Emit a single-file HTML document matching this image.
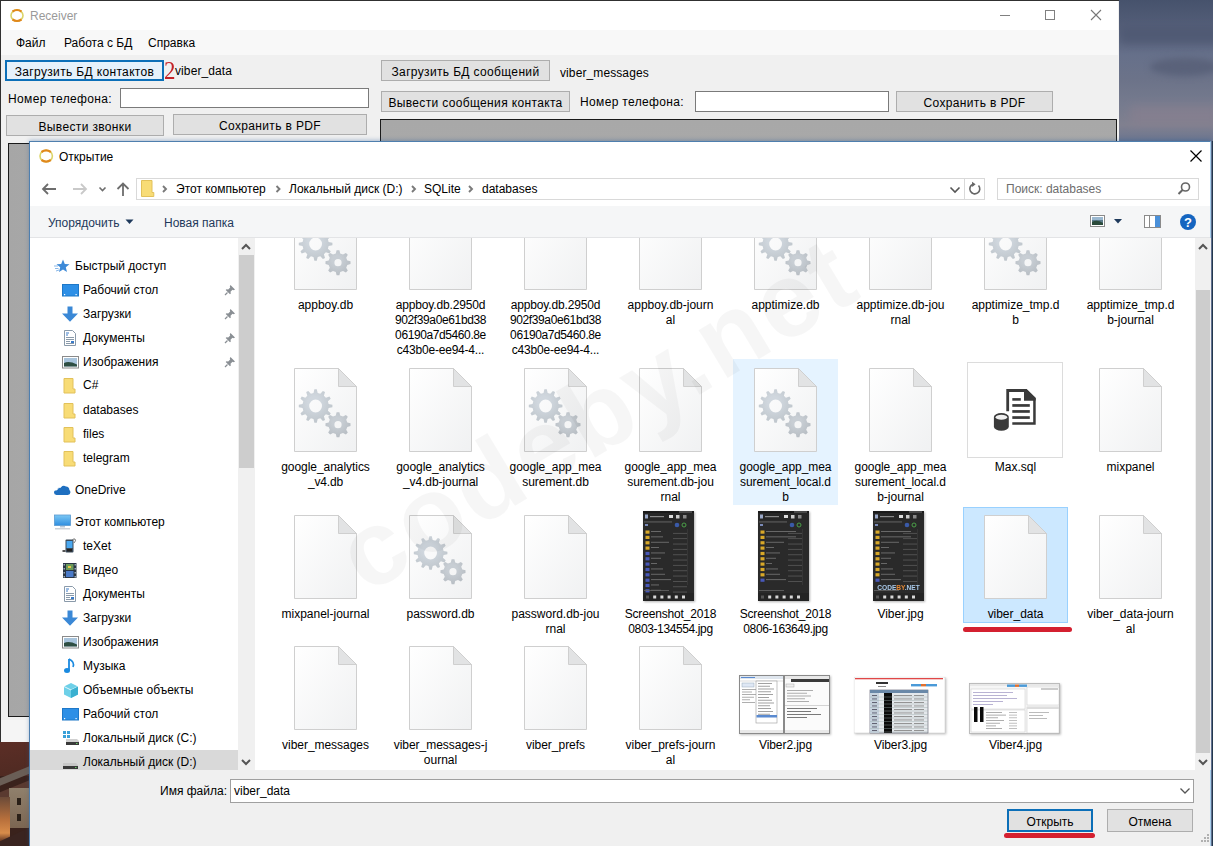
<!DOCTYPE html>
<html><head><meta charset="utf-8">
<style>
*{margin:0;padding:0;box-sizing:border-box}
html,body{width:1213px;height:846px;overflow:hidden;background:#4a5670}
body{position:relative;font-family:"Liberation Sans",sans-serif;font-size:12px;color:#000}
.rc{letter-spacing:0.35px}
.a{position:absolute}
.t{position:absolute;white-space:nowrap;line-height:17px}
.btn{position:absolute;background:#e1e1e1;border:1px solid #adadad;text-align:center;line-height:19px;white-space:nowrap;padding-top:2px}
.inp{position:absolute;background:#fff;border:1px solid #7a7a7a}
.nv{position:absolute;left:83px;white-space:nowrap;line-height:17px}
.fn{position:absolute;width:105px;text-align:center;line-height:15px;letter-spacing:0}
</style></head><body>
<div class="a" style="left:1119px;top:0;width:94px;height:846px;background:linear-gradient(180deg,#46526c 0px,#56607a 30px,#66708a 55px,#6c7389 80px,#767b8e 105px,#80808f 125px,#6a7590 142px,#6a7590 846px)"></div><div class="a" style="left:1120px;top:26px;width:100px;height:18px;background:#4e5872;filter:blur(4px);opacity:0.8"></div><div class="a" style="left:1150px;top:58px;width:70px;height:18px;border-radius:50%;background:#5a627a;filter:blur(3px)"></div><div class="a" style="left:1130px;top:105px;width:90px;height:20px;background:#8a8090;filter:blur(5px);opacity:0.6"></div><div class="a" style="left:0;top:742px;width:30px;height:104px;background:#3a221c;overflow:hidden"><div class="a" style="left:0;top:0;width:30px;height:34px;background:linear-gradient(170deg,#5c2e26,#4e2a22)"></div><div class="a" style="left:-4px;top:30px;width:40px;height:7px;background:#6a5e56;transform:rotate(-22deg)"></div><div class="a" style="left:-4px;top:44px;width:40px;height:8px;background:#5a3a30;transform:rotate(-22deg)"></div><div class="a" style="left:9px;top:46px;width:21px;height:40px;background:linear-gradient(180deg,#90806c,#7c6652)"></div><div class="a" style="left:17px;top:56px;width:4px;height:7px;background:#2a2018"></div><div class="a" style="left:17px;top:72px;width:4px;height:7px;background:#2a2018"></div><div class="a" style="left:0;top:55px;width:10px;height:45px;background:linear-gradient(180deg,#6a4a38,#b8703c 50%,#d88c4a 80%,#5a3020)"></div><div class="a" style="left:-5px;top:92px;width:45px;height:20px;background:#3a2420;transform:rotate(-25deg)"></div></div><div class="rc"><div class="a" style="left:0;top:0;width:1119px;height:742px;background:#f0f0f0;border:1px solid #303030;border-right:none"></div>
<div class="a" style="left:1px;top:1px;width:1117px;height:29px;background:#fff"></div>
<div class="a" style="left:1px;top:30px;width:1117px;height:25px;background:#f8f8f8"></div>
<div class="t" style="left:30px;top:8px;color:#9a9a9a;letter-spacing:0">Receiver</div>
<div class="t" style="left:16px;top:35px;letter-spacing:0">Файл</div>
<div class="t" style="left:64px;top:35px;letter-spacing:0">Работа с БД</div>
<div class="t" style="left:148px;top:35px;letter-spacing:0">Справка</div>
<svg class="a" style="left:990px;top:5px" width="120" height="20" viewBox="0 0 120 20">
<line x1="10" y1="10.5" x2="20" y2="10.5" stroke="#808080" stroke-width="1"/>
<rect x="55.5" y="5.5" width="9" height="9" fill="none" stroke="#808080" stroke-width="1"/>
<path d="M101 5 L111 15 M111 5 L101 15" stroke="#777" stroke-width="1.1"/>
</svg>
<svg class="a" style="left:9px;top:8px" width="16" height="15" viewBox="0 0 16 15">
<ellipse cx="8" cy="7.5" rx="6" ry="5.6" fill="none" stroke="#dcd468" stroke-width="1.6"/>
<path d="M3.5 3.5 Q8 0.5 12.5 3.5" fill="none" stroke="#e0881c" stroke-width="2.2"/><path d="M3.5 11.5 Q8 14.5 12.5 11.5" fill="none" stroke="#e0881c" stroke-width="2.2"/>
</svg>
<div class="btn" style="left:5px;top:60px;width:159px;height:21px;border:2px solid #0c6fb8;background:#e5f1fb;line-height:18px;padding-top:1px">Загрузить БД контактов</div>
<div class="t" style="left:164px;top:58px;font-family:'Liberation Serif',serif;font-size:26px;line-height:26px;color:#c42228;letter-spacing:0;transform:scaleX(0.88);transform-origin:0 0">2</div>
<div class="t" style="left:175px;top:63px;letter-spacing:0.1px">viber_data</div>
<div class="t" style="left:8px;top:91px">Номер телефона:</div>
<div class="inp" style="left:120px;top:88px;width:249px;height:20px"></div>
<div class="btn" style="left:6px;top:115px;width:158px;height:21px">Вывести звонки</div>
<div class="btn" style="left:173px;top:114px;width:194px;height:21px">Сохранить в PDF</div>
<div class="a" style="left:8px;top:143px;width:400px;height:574px;border:1px solid #1a1a1a;background:linear-gradient(90deg,#a6a6a6,#b8b8b8)"></div>
<div class="btn" style="left:381px;top:60px;width:169px;height:21px">Загрузить БД сообщений</div>
<div class="t" style="left:560px;top:65px;letter-spacing:0.1px">viber_messages</div>
<div class="btn" style="left:381px;top:91px;width:189px;height:21px">Вывести сообщения контакта</div>
<div class="t" style="left:580px;top:94px">Номер телефона:</div>
<div class="inp" style="left:695px;top:91px;width:194px;height:21px"></div>
<div class="btn" style="left:896px;top:91px;width:157px;height:21px">Сохранить в PDF</div>
<div class="a" style="left:380px;top:119px;width:737px;height:600px;border:1px solid #1a1a1a;background:linear-gradient(180deg,#a8a8a8,#b8b8b8)"></div>
<div class="a" style="left:1px;top:720px;width:1117px;height:22px;background:#f5f5f5"></div>
</div>
<div class="a" style="left:29px;top:141px;width:1182px;height:705px;background:#fff;border:1px solid #4f7fae;border-right:1px solid #a8cfec;border-bottom:none;box-shadow:0 -1px 4px rgba(40,90,150,0.35)"></div><svg class="a" style="left:38px;top:148px" width="16" height="16" viewBox="0 0 16 16">
<ellipse cx="8.2" cy="8" rx="6.2" ry="5.8" fill="none" stroke="#dcd468" stroke-width="1.6"/>
<path d="M3.5 4 Q8 0.8 12.8 4" fill="none" stroke="#e0881c" stroke-width="2.2"/><path d="M3.5 12 Q8 15.2 12.8 12" fill="none" stroke="#e0881c" stroke-width="2.2"/></svg>
<div class="t" style="left:59px;top:149px">Открытие</div>
<svg class="a" style="left:1189px;top:149px" width="14" height="14" viewBox="0 0 14 14"><path d="M1.5 1.5 L12.5 12.5 M12.5 1.5 L1.5 12.5" stroke="#000" stroke-width="1.2"/></svg>
<div class="a" style="left:1212px;top:141px;width:1px;height:705px;background:#24384c"></div><svg class="a" style="left:40px;top:180px" width="95" height="18" viewBox="0 0 95 18">
<path d="M3 9 H16 M8 4 L3 9 L8 14" fill="none" stroke="#6d6d6d" stroke-width="1.8"/>
<path d="M33 9 H46 M41 4 L46 9 L41 14" fill="none" stroke="#c9c9c9" stroke-width="1.8"/>
<path d="M59.5 7.5 L62.5 10.5 L65.5 7.5" fill="none" stroke="#6d6d6d" stroke-width="1.6"/>
<path d="M83 16 V4 M77.5 9 L83 3.5 L88.5 9" fill="none" stroke="#6d6d6d" stroke-width="1.8"/>
</svg>
<div class="a" style="left:136px;top:178px;width:849px;height:22px;border:1px solid #d9d9d9;background:#fff"></div>
<div class="a" style="left:964px;top:178px;width:1px;height:22px;background:#d9d9d9"></div>
<svg class="a" style="left:141px;top:180px" width="14" height="17" viewBox="0 0 14 17"><path d="M0.5 0.5 H11 V12.5 H12.8 V16.5 H0.5 Z" fill="#f8dc76" stroke="#e2c15a" stroke-width="1"/></svg>
<svg class="a" style="left:160px;top:184px" width="400" height="10" viewBox="0 0 400 10">
<path d="M3 2 L6 5 L3 8" fill="none" stroke="#7a7a7a" stroke-width="1.9"/>
<path d="M116.5 2 L119.5 5 L116.5 8" fill="none" stroke="#7a7a7a" stroke-width="1.9"/>
<path d="M252 2 L255 5 L252 8" fill="none" stroke="#7a7a7a" stroke-width="1.9"/>
<path d="M309 2 L312 5 L309 8" fill="none" stroke="#7a7a7a" stroke-width="1.9"/>
</svg>
<div class="t" style="left:176px;top:181px">Этот компьютер</div>
<div class="t" style="left:289px;top:181px">Локальный диск (D:)</div>
<div class="t" style="left:424px;top:181px">SQLite</div>
<div class="t" style="left:482px;top:181px">databases</div>
<svg class="a" style="left:948px;top:184px" width="14" height="12" viewBox="0 0 14 12"><path d="M2.5 3.5 L7 8 L11.5 3.5" fill="none" stroke="#555" stroke-width="1.6"/></svg>
<svg class="a" style="left:967px;top:181px" width="16" height="16" viewBox="0 0 16 16"><path d="M11.5 4.5 A5 5 0 1 1 6 3.2" fill="none" stroke="#666" stroke-width="1.6"/><path d="M5 0.8 L8.6 3.3 L5.2 5.9 Z" fill="#666"/></svg>
<div class="a" style="left:997px;top:178px;width:202px;height:22px;border:1px solid #d9d9d9;background:#fff"></div>
<div class="t" style="left:1006px;top:181px;color:#6d6d6d">Поиск: databases</div>
<svg class="a" style="left:1176px;top:181px" width="16" height="16" viewBox="0 0 16 16"><circle cx="9.5" cy="6" r="4" fill="none" stroke="#666" stroke-width="1.6"/><path d="M6.7 8.8 L2.5 13" stroke="#666" stroke-width="2"/></svg>
<div class="a" style="left:30px;top:206px;width:1180px;height:32px;background:#f5f6f7;border-bottom:1px solid #e3e4e6"></div>
<div class="t" style="left:48px;top:214.5px;color:#1e395b">Упорядочить</div>
<svg class="a" style="left:125px;top:219px" width="10" height="6" viewBox="0 0 10 6"><path d="M0.5 0.5 H8.5 L4.5 5 Z" fill="#1e395b"/></svg>
<div class="t" style="left:164px;top:214.5px;color:#1e395b">Новая папка</div>
<svg class="a" style="left:1089px;top:213px" width="110" height="18" viewBox="0 0 110 18">
<rect x="1.5" y="2.5" width="14" height="11" fill="#fff" stroke="#8a8a8a"/><rect x="3" y="4" width="11" height="8" fill="#5a7a8a"/><path d="M3 9 Q8 6 14 10 V12 H3Z" fill="#2a4a3a"/><rect x="3" y="4" width="11" height="3" fill="#9ab8d0"/>
<path d="M25 6 H33 L29 10.5 Z" fill="#1e395b"/>
<rect x="55.5" y="2.5" width="16" height="12" fill="#fff" stroke="#8a8a8a"/><rect x="66" y="3" width="5" height="11" fill="#4a90d9"/><line x1="60.5" y1="3" x2="60.5" y2="14" stroke="#8a8a8a"/>
<circle cx="99" cy="9" r="8" fill="#1565c0"/><text x="99" y="13.5" font-family="Liberation Sans" font-weight="bold" font-size="13" fill="#fff" text-anchor="middle">?</text>
</svg>
<div class="a" style="left:30px;top:238px;width:1180px;height:532px;background:#fff"></div><div class="a" style="left:238px;top:238px;width:17px;height:532px;background:#f0f0f0"></div>
<div class="a" style="left:239px;top:255px;width:15px;height:213px;background:#cdcdcd"></div>
<svg class="a" style="left:240px;top:242px" width="12" height="10" viewBox="0 0 12 10"><path d="M2 7 L6 3 L10 7" fill="none" stroke="#555" stroke-width="2"/></svg>
<svg class="a" style="left:240px;top:757px" width="12" height="10" viewBox="0 0 12 10"><path d="M2 3 L6 7 L10 3" fill="none" stroke="#555" stroke-width="2"/></svg>
<div class="a" style="left:30px;top:750px;width:208px;height:20px;background:#d9d9d9"></div>
<svg class="a" style="left:54px;top:258px" width="18" height="17" viewBox="0 0 18 17"><path d="M9 1.5 L10.8 6 L15.5 6.3 L11.8 9.3 L13 14 L9 11.4 L5 14 L6.2 9.3 L2.5 6.3 L7.2 6 Z" fill="#3d8ad8"/><path d="M0 8 L4 8 M1 10.5 L4.5 10.5 M2 13 L5 12" stroke="#8ab8e8" stroke-width="1"/></svg><div class="t" style="left:75px;top:258px">Быстрый доступ</div><svg class="a" style="left:62px;top:282px" width="18" height="17" viewBox="0 0 18 17"><rect x="0.5" y="2.5" width="16" height="11.5" fill="#2d8fe6" stroke="#1e78c8" stroke-width="1"/><rect x="2" y="12" width="1.2" height="1.2" fill="#fff"/><rect x="13.5" y="12" width="1.2" height="1.2" fill="#fff"/></svg><div class="t" style="left:83px;top:282px">Рабочий стол</div><svg class="a" style="left:62px;top:306px" width="18" height="17" viewBox="0 0 18 17"><path d="M5.5 0.5 H10.5 V7.5 H16 L8 15.7 L0 7.5 H5.5 Z" fill="#3a88d6"/></svg><div class="t" style="left:83px;top:306px">Загрузки</div><svg class="a" style="left:62px;top:330px" width="18" height="17" viewBox="0 0 18 17"><path d="M2.5 0.5 H10.5 L13.5 3.5 V15.5 H2.5 Z" fill="#fff" stroke="#8a9aaa"/><path d="M4 3 H7 M4 5 H6" stroke="#3a7ac8" stroke-width="1"/><path d="M4 7.5 H12 M4 9.5 H12 M4 11.5 H8 M4 13.5 H12" stroke="#8a9aaa" stroke-width="1"/><rect x="9" y="11" width="3" height="2" fill="#3a7ac8"/></svg><div class="t" style="left:83px;top:330px">Документы</div><svg class="a" style="left:62px;top:354px" width="18" height="17" viewBox="0 0 18 17"><rect x="0.5" y="2.5" width="16" height="11.5" fill="#fff" stroke="#8a8a8a"/><rect x="2" y="4" width="13" height="8.5" fill="#a8c4dc"/><path d="M2 9 Q7 6.5 15 10.5 V12.5 H2 Z" fill="#2e4e42"/></svg><div class="t" style="left:83px;top:354px">Изображения</div><svg class="a" style="left:62px;top:377px" width="18" height="17" viewBox="0 0 18 17"><path d="M2 1.5 H11 V12 H13 V16 H2 Z" fill="#f8dc76" stroke="#e2c15a"/></svg><div class="t" style="left:83px;top:377px">C#</div><svg class="a" style="left:62px;top:402px" width="18" height="17" viewBox="0 0 18 17"><path d="M2 1.5 H11 V12 H13 V16 H2 Z" fill="#f8dc76" stroke="#e2c15a"/></svg><div class="t" style="left:83px;top:402px">databases</div><svg class="a" style="left:62px;top:426px" width="18" height="17" viewBox="0 0 18 17"><path d="M2 1.5 H11 V12 H13 V16 H2 Z" fill="#f8dc76" stroke="#e2c15a"/></svg><div class="t" style="left:83px;top:426px">files</div><svg class="a" style="left:62px;top:450px" width="18" height="17" viewBox="0 0 18 17"><path d="M2 1.5 H11 V12 H13 V16 H2 Z" fill="#f8dc76" stroke="#e2c15a"/></svg><div class="t" style="left:83px;top:450px">telegram</div><svg class="a" style="left:54px;top:482px" width="18" height="17" viewBox="0 0 18 17"><path d="M2.5 12.9 Q0 12.9 0 10.6 Q0 8.2 2.8 8.2 Q3.6 5 7 5.2 Q9.2 2.8 12 4.4 Q15.2 4.6 15.4 8 Q16.5 8.6 16.4 10.5 Q16.2 12.9 13.8 12.9 Z" fill="#1e6fc0"/><path d="M2.8 8.2 Q3.6 5 7 5.2" fill="none" stroke="#fff" stroke-width="0.8"/></svg><div class="t" style="left:75px;top:482px">OneDrive</div><svg class="a" style="left:54px;top:514px" width="18" height="17" viewBox="0 0 18 17"><defs><linearGradient id="pcg" x1="0" y1="0" x2="0" y2="1"><stop offset="0" stop-color="#7cc8f4"/><stop offset="1" stop-color="#2e8ee0"/></linearGradient></defs><rect x="0.5" y="1" width="16" height="10.5" fill="url(#pcg)" stroke="#5a9ad0" stroke-width="0.8"/><rect x="6" y="12" width="5" height="1.5" fill="#b8c8d8"/><rect x="1" y="14.2" width="15" height="1.2" fill="#c0c8d0"/></svg><div class="t" style="left:75px;top:514px">Этот компьютер</div><svg class="a" style="left:62px;top:538px" width="18" height="17" viewBox="0 0 18 17"><rect x="3.5" y="1.5" width="8" height="13" rx="1" fill="#3a4a5a"/><rect x="4.5" y="3" width="6" height="7" fill="#4aa8f0"/><rect x="5" y="11" width="5" height="2.5" fill="#222"/><path d="M10 3 Q11 0 13 1 Q14.5 2.5 12 5" fill="none" stroke="#555" stroke-width="0.8"/><rect x="0.5" y="12" width="3" height="2" fill="#555"/></svg><div class="t" style="left:83px;top:538px">teXet</div><svg class="a" style="left:62px;top:562px" width="18" height="17" viewBox="0 0 18 17"><rect x="1" y="1" width="13.5" height="15" fill="#2a3644"/><rect x="1.5" y="2" width="1.5" height="1.5" fill="#9ab"/><rect x="1.5" y="6" width="1.5" height="1.5" fill="#9ab"/><rect x="1.5" y="10" width="1.5" height="1.5" fill="#9ab"/><rect x="1.5" y="14" width="1.5" height="1.5" fill="#9ab"/><rect x="12.5" y="2" width="1.5" height="1.5" fill="#9ab"/><rect x="12.5" y="6" width="1.5" height="1.5" fill="#9ab"/><rect x="12.5" y="10" width="1.5" height="1.5" fill="#9ab"/><rect x="12.5" y="14" width="1.5" height="1.5" fill="#9ab"/><rect x="4" y="2" width="7.5" height="6" fill="#6a9a5a"/><rect x="4" y="9" width="7.5" height="6" fill="#4a7ac8"/><rect x="6" y="4" width="3" height="2" fill="#e8c848"/></svg><div class="t" style="left:83px;top:562px">Видео</div><svg class="a" style="left:62px;top:586px" width="18" height="17" viewBox="0 0 18 17"><path d="M2.5 0.5 H10.5 L13.5 3.5 V15.5 H2.5 Z" fill="#fff" stroke="#8a9aaa"/><path d="M4 3 H7 M4 5 H6" stroke="#3a7ac8" stroke-width="1"/><path d="M4 7.5 H12 M4 9.5 H12 M4 11.5 H8 M4 13.5 H12" stroke="#8a9aaa" stroke-width="1"/><rect x="9" y="11" width="3" height="2" fill="#3a7ac8"/></svg><div class="t" style="left:83px;top:586px">Документы</div><svg class="a" style="left:62px;top:610px" width="18" height="17" viewBox="0 0 18 17"><path d="M5.5 0.5 H10.5 V7.5 H16 L8 15.7 L0 7.5 H5.5 Z" fill="#3a88d6"/></svg><div class="t" style="left:83px;top:610px">Загрузки</div><svg class="a" style="left:62px;top:634px" width="18" height="17" viewBox="0 0 18 17"><rect x="0.5" y="2.5" width="16" height="11.5" fill="#fff" stroke="#8a8a8a"/><rect x="2" y="4" width="13" height="8.5" fill="#a8c4dc"/><path d="M2 9 Q7 6.5 15 10.5 V12.5 H2 Z" fill="#2e4e42"/></svg><div class="t" style="left:83px;top:634px">Изображения</div><svg class="a" style="left:62px;top:658px" width="18" height="17" viewBox="0 0 18 17"><path d="M7 1 V12" stroke="#1a8ae0" stroke-width="1.8"/><ellipse cx="5" cy="12.5" rx="3" ry="2.5" fill="#1a8ae0"/><path d="M7 1 Q13 4 11 9" fill="none" stroke="#1a8ae0" stroke-width="1.6"/></svg><div class="t" style="left:83px;top:658px">Музыка</div><svg class="a" style="left:62px;top:682px" width="18" height="17" viewBox="0 0 18 17"><path d="M9 1 L16 4.5 V12.5 L9 16 L2 12.5 V4.5 Z" fill="#6ed0e8"/><path d="M2 4.5 L9 8 L16 4.5" fill="none" stroke="#fff" stroke-width="0.8"/><path d="M9 8 V16 L16 12.5 V4.5 Z" fill="#3ab0d0"/></svg><div class="t" style="left:83px;top:682px">Объемные объекты</div><svg class="a" style="left:62px;top:706px" width="18" height="17" viewBox="0 0 18 17"><rect x="0.5" y="2.5" width="16" height="11.5" fill="#2d8fe6" stroke="#1e78c8" stroke-width="1"/><rect x="2" y="12" width="1.2" height="1.2" fill="#fff"/><rect x="13.5" y="12" width="1.2" height="1.2" fill="#fff"/></svg><div class="t" style="left:83px;top:706px">Рабочий стол</div><svg class="a" style="left:62px;top:730px" width="18" height="17" viewBox="0 0 18 17"><rect x="1" y="1" width="3" height="3" fill="#3aa0d8"/><rect x="5" y="1" width="3" height="3" fill="#3aa0d8"/><rect x="1" y="5" width="3" height="3" fill="#3aa0d8"/><rect x="5" y="5" width="3" height="3" fill="#3aa0d8"/><path d="M4 9 H15 L17 11 V15 H4 Z" fill="#d0d0d0"/><rect x="4" y="12" width="13" height="3" fill="#3a3a3a"/><rect x="14" y="13" width="1.5" height="1" fill="#6c6"/></svg><div class="t" style="left:83px;top:730px">Локальный диск (C:)</div><svg class="a" style="left:62px;top:754px" width="18" height="17" viewBox="0 0 18 17"><path d="M1 9 H14 L16 11 V15 H1 Z" fill="#c8c8c8"/><rect x="1" y="12" width="15" height="3" fill="#3a3a3a"/><rect x="13" y="13" width="1.5" height="1" fill="#6c6"/></svg><div class="t" style="left:83px;top:754px">Локальный диск (D:)</div><svg class="a" style="left:224px;top:284px" width="12" height="12" viewBox="0 0 12 12"><path d="M6.5 1 L11 5.5 L9.8 6.2 L8.5 5.8 L6.5 7.8 L6.8 9.5 L6 10.3 L1.7 6 L2.5 5.2 L4.2 5.5 L6.2 3.5 L5.8 2.2 Z" fill="#8a8f94"/><path d="M3.5 8.5 L1 11" stroke="#8a8f94" stroke-width="1.3"/></svg><svg class="a" style="left:224px;top:308px" width="12" height="12" viewBox="0 0 12 12"><path d="M6.5 1 L11 5.5 L9.8 6.2 L8.5 5.8 L6.5 7.8 L6.8 9.5 L6 10.3 L1.7 6 L2.5 5.2 L4.2 5.5 L6.2 3.5 L5.8 2.2 Z" fill="#8a8f94"/><path d="M3.5 8.5 L1 11" stroke="#8a8f94" stroke-width="1.3"/></svg><svg class="a" style="left:224px;top:332px" width="12" height="12" viewBox="0 0 12 12"><path d="M6.5 1 L11 5.5 L9.8 6.2 L8.5 5.8 L6.5 7.8 L6.8 9.5 L6 10.3 L1.7 6 L2.5 5.2 L4.2 5.5 L6.2 3.5 L5.8 2.2 Z" fill="#8a8f94"/><path d="M3.5 8.5 L1 11" stroke="#8a8f94" stroke-width="1.3"/></svg><svg class="a" style="left:224px;top:356px" width="12" height="12" viewBox="0 0 12 12"><path d="M6.5 1 L11 5.5 L9.8 6.2 L8.5 5.8 L6.5 7.8 L6.8 9.5 L6 10.3 L1.7 6 L2.5 5.2 L4.2 5.5 L6.2 3.5 L5.8 2.2 Z" fill="#8a8f94"/><path d="M3.5 8.5 L1 11" stroke="#8a8f94" stroke-width="1.3"/></svg><div class="a" style="left:1195px;top:238px;width:16px;height:532px;background:#f0f0f0"></div>
<div class="a" style="left:1196px;top:290px;width:14px;height:463px;background:#cdcdcd"></div>
<svg class="a" style="left:1197px;top:242px" width="12" height="10" viewBox="0 0 12 10"><path d="M2 7 L6 3 L10 7" fill="none" stroke="#555" stroke-width="2"/></svg>
<svg class="a" style="left:1197px;top:757px" width="12" height="10" viewBox="0 0 12 10"><path d="M2 3 L6 7 L10 3" fill="none" stroke="#555" stroke-width="2"/></svg>
<div class="a" style="left:0;top:0;width:1213px;height:846px;clip-path:inset(238px 18px 76px 255px)"><svg width="0" height="0" style="position:absolute"><defs><linearGradient id="pg" x1="0" y1="0" x2="1" y2="1"><stop offset="0" stop-color="#ffffff"/><stop offset="1" stop-color="#f0f1f2"/></linearGradient><radialGradient id="gg" cx="0.45" cy="0.4" r="0.6"><stop offset="0.3" stop-color="#d0d7de"/><stop offset="1" stop-color="#bfc6cc"/></radialGradient><radialGradient id="gg2" cx="0.45" cy="0.4" r="0.6"><stop offset="0.3" stop-color="#c8ced4"/><stop offset="1" stop-color="#b8bec4"/></radialGradient><symbol id="page" viewBox="0 0 63 84"><path d="M0.5 0.5 H44.5 L62.5 18.5 V83.5 H0.5 Z" fill="url(#pg)" stroke="#cfcfcf"/><path d="M44.5 0.5 V18.5 H62.5 Z" fill="#e2e3e4" stroke="#cfcfcf"/></symbol><symbol id="gear" viewBox="0 0 63 84"><path d="M0.5 0.5 H44.5 L62.5 18.5 V83.5 H0.5 Z" fill="url(#pg)" stroke="#cfcfcf"/><path d="M44.5 0.5 V18.5 H62.5 Z" fill="#e2e3e4" stroke="#cfcfcf"/><path d="M19.5 25.0 L20.4 21.2 L22.8 21.2 L23.7 25.0 L26.3 25.7 L28.9 22.9 L31.0 24.1 L29.9 27.7 L31.9 29.7 L35.5 28.6 L36.7 30.7 L33.9 33.3 L34.6 35.9 L38.4 36.8 L38.4 39.2 L34.6 40.1 L33.9 42.7 L36.7 45.3 L35.5 47.4 L31.9 46.3 L29.9 48.3 L31.0 51.9 L28.9 53.1 L26.3 50.3 L23.7 51.0 L22.8 54.8 L20.4 54.8 L19.5 51.0 L16.9 50.3 L14.3 53.1 L12.2 51.9 L13.3 48.3 L11.3 46.3 L7.7 47.4 L6.5 45.3 L9.3 42.7 L8.6 40.1 L4.8 39.2 L4.8 36.8 L8.6 35.9 L9.3 33.3 L6.5 30.7 L7.7 28.6 L11.3 29.7 L13.3 27.7 L12.2 24.1 L14.3 22.9 L16.9 25.7 Z M15.2 38.0 a6.4 6.4 0 1 0 12.8 0 a6.4 6.4 0 1 0 -12.8 0 Z" fill="url(#gg)" fill-rule="evenodd"/><path d="M41.8 47.4 L42.6 44.2 L45.4 44.2 L46.2 47.4 L49.0 48.5 L51.9 46.9 L53.8 48.8 L52.2 51.7 L53.3 54.5 L56.5 55.3 L56.5 58.1 L53.3 58.9 L52.2 61.7 L53.8 64.6 L51.9 66.5 L49.0 64.9 L46.2 66.0 L45.4 69.2 L42.6 69.2 L41.8 66.0 L39.0 64.9 L36.1 66.5 L34.2 64.6 L35.8 61.7 L34.7 58.9 L31.5 58.1 L31.5 55.3 L34.7 54.5 L35.8 51.7 L34.2 48.8 L36.1 46.9 L39.0 48.5 Z M40.4 56.7 a3.6 3.6 0 1 0 7.2 0 a3.6 3.6 0 1 0 -7.2 0 Z" fill="url(#gg2)" fill-rule="evenodd"/></symbol></defs></svg><div class="a" style="left:733px;top:359px;width:105px;height:146px;background:#e5f3ff"></div><div class="a" style="left:963px;top:507px;width:105px;height:116px;background:#cce8ff;border:1px solid #99d1ff"></div><svg class="a" style="left:294px;top:206px" width="63" height="84"><use href="#gear"/></svg><div class="fn" style="left:273px;top:298px"><span style="letter-spacing:-0.00px">appboy.db</span></div><svg class="a" style="left:409px;top:206px" width="63" height="84"><use href="#page"/></svg><div class="fn" style="left:388px;top:298px"><span style="letter-spacing:-0.15px">appboy.db.2950d</span><br><span style="letter-spacing:-0.37px">902f39a0e61bd38</span><br><span style="letter-spacing:-0.40px">06190a7d5460.8e</span><br><span style="letter-spacing:-0.21px">c43b0e-ee94-4...</span></div><svg class="a" style="left:524px;top:206px" width="63" height="84"><use href="#page"/></svg><div class="fn" style="left:503px;top:298px"><span style="letter-spacing:-0.15px">appboy.db.2950d</span><br><span style="letter-spacing:-0.37px">902f39a0e61bd38</span><br><span style="letter-spacing:-0.40px">06190a7d5460.8e</span><br><span style="letter-spacing:-0.21px">c43b0e-ee94-4...</span></div><svg class="a" style="left:639px;top:206px" width="63" height="84"><use href="#page"/></svg><div class="fn" style="left:618px;top:298px"><span style="letter-spacing:-0.00px">appboy.db-journ</span><br><span style="letter-spacing:-0.00px">al</span></div><svg class="a" style="left:754px;top:206px" width="63" height="84"><use href="#gear"/></svg><div class="fn" style="left:733px;top:298px"><span style="letter-spacing:-0.00px">apptimize.db</span></div><svg class="a" style="left:869px;top:206px" width="63" height="84"><use href="#page"/></svg><div class="fn" style="left:848px;top:298px"><span style="letter-spacing:-0.00px">apptimize.db-jou</span><br><span style="letter-spacing:-0.00px">rnal</span></div><svg class="a" style="left:984px;top:206px" width="63" height="84"><use href="#gear"/></svg><div class="fn" style="left:963px;top:298px"><span style="letter-spacing:-0.02px">apptimize_tmp.d</span><br><span style="letter-spacing:-0.00px">b</span></div><svg class="a" style="left:1099px;top:206px" width="63" height="84"><use href="#page"/></svg><div class="fn" style="left:1078px;top:298px"><span style="letter-spacing:-0.02px">apptimize_tmp.d</span><br><span style="letter-spacing:-0.00px">b-journal</span></div><svg class="a" style="left:294px;top:368px" width="63" height="84"><use href="#gear"/></svg><div class="fn" style="left:273px;top:460px"><span style="letter-spacing:-0.05px">google_analytics</span><br><span style="letter-spacing:-0.13px">_v4.db</span></div><svg class="a" style="left:409px;top:368px" width="63" height="84"><use href="#page"/></svg><div class="fn" style="left:388px;top:460px"><span style="letter-spacing:-0.05px">google_analytics</span><br><span style="letter-spacing:-0.06px">_v4.db-journal</span></div><svg class="a" style="left:524px;top:368px" width="63" height="84"><use href="#gear"/></svg><div class="fn" style="left:503px;top:460px"><span style="letter-spacing:-0.07px">google_app_mea</span><br><span style="letter-spacing:-0.00px">surement.db</span></div><svg class="a" style="left:639px;top:368px" width="63" height="84"><use href="#page"/></svg><div class="fn" style="left:618px;top:460px"><span style="letter-spacing:-0.07px">google_app_mea</span><br><span style="letter-spacing:-0.00px">surement.db-jou</span><br><span style="letter-spacing:-0.00px">rnal</span></div><svg class="a" style="left:754px;top:368px" width="63" height="84"><use href="#gear"/></svg><div class="fn" style="left:733px;top:460px"><span style="letter-spacing:-0.07px">google_app_mea</span><br><span style="letter-spacing:-0.02px">surement_local.d</span><br><span style="letter-spacing:-0.00px">b</span></div><svg class="a" style="left:869px;top:368px" width="63" height="84"><use href="#page"/></svg><div class="fn" style="left:848px;top:460px"><span style="letter-spacing:-0.07px">google_app_mea</span><br><span style="letter-spacing:-0.02px">surement_local.d</span><br><span style="letter-spacing:-0.00px">b-journal</span></div><div class="a" style="left:967px;top:362px;width:96px;height:96px;border:1px solid #dcdcdc;background:#fff"></div><svg class="a" style="left:985px;top:380px" width="60" height="60" viewBox="0 0 60 60">
<path d="M21.3 8.9 H41.5 L50.7 18 V44.8 H27.3 V42.2 H48.2 V20.6 H39 V12 H24.1 V31.2 H21.3 Z" fill="#3a3a3a"/>
<path d="M41.5 8.9 L50.7 18 V20.6 H39 V8.9 Z" fill="#3a3a3a"/>
<rect x="27.3" y="18.1" width="8.5" height="2.6" fill="#3a3a3a"/>
<rect x="27.3" y="24.1" width="17.5" height="2.7" fill="#3a3a3a"/>
<rect x="27.3" y="30.1" width="17.5" height="2.7" fill="#3a3a3a"/>
<rect x="27.3" y="36.2" width="17.5" height="2.7" fill="#3a3a3a"/>
<path d="M8.9 37 A7.45 4 0 0 1 23.8 37 V46.7 A7.45 4 0 0 1 8.9 46.7 Z" fill="#3a3a3a"/>
<ellipse cx="16.4" cy="37.2" rx="5.8" ry="2.5" fill="#f0f0f0"/>
</svg><div class="fn" style="left:963px;top:460px"><span style="letter-spacing:-0.00px">Max.sql</span></div><svg class="a" style="left:1099px;top:368px" width="63" height="84"><use href="#page"/></svg><div class="fn" style="left:1078px;top:460px"><span style="letter-spacing:-0.00px">mixpanel</span></div><svg class="a" style="left:294px;top:515px" width="63" height="84"><use href="#page"/></svg><div class="fn" style="left:273px;top:607px"><span style="letter-spacing:-0.00px">mixpanel-journal</span></div><svg class="a" style="left:409px;top:515px" width="63" height="84"><use href="#gear"/></svg><div class="fn" style="left:388px;top:607px"><span style="letter-spacing:-0.00px">password.db</span></div><svg class="a" style="left:524px;top:515px" width="63" height="84"><use href="#page"/></svg><div class="fn" style="left:503px;top:607px"><span style="letter-spacing:-0.00px">password.db-jou</span><br><span style="letter-spacing:-0.00px">rnal</span></div><svg class="a" style="left:643px;top:511px;filter:drop-shadow(1px 1px 1px rgba(0,0,0,0.3))" width="52" height="91" viewBox="0 0 52 91"><rect x="0" y="0" width="51" height="90" fill="#2a2a2a"/><rect x="0" y="0" width="51" height="2" fill="#1a1a1a"/><rect x="36" y="0.5" width="13" height="1" fill="#777"/><rect x="0" y="2" width="51" height="7" fill="#262626"/><rect x="2" y="3.5" width="3" height="4" fill="#9aa8c8"/><rect x="7" y="5" width="14" height="1.2" fill="#8a8a8a"/><rect x="26" y="4" width="4" height="3" fill="#ddd"/><rect x="33" y="4" width="3.5" height="3.5" fill="#ccc"/><rect x="40" y="4" width="3.5" height="3.5" fill="#888"/><rect x="1" y="10.5" width="28" height="0.9" fill="#6a6a6a"/><rect x="2" y="13" width="3" height="2" fill="#7a8ab8"/><circle cx="34" cy="14" r="2.3" fill="#3a5aa8"/><circle cx="41" cy="14" r="2" fill="none" stroke="#4aa048" stroke-width="1"/><rect x="2.5" y="19.5" width="4" height="3.2" fill="#d8a828"/><rect x="8" y="20.1" width="10" height="0.9" fill="#707070"/><rect x="30" y="21.9" width="14" height="0.9" fill="#555"/><rect x="2.5" y="24.8" width="4" height="3.2" fill="#d8a828"/><rect x="8" y="25.4" width="12" height="0.9" fill="#707070"/><rect x="30" y="27.2" width="14" height="0.9" fill="#555"/><rect x="2.5" y="30.2" width="4" height="3.2" fill="#d8a828"/><rect x="8" y="30.8" width="18" height="0.9" fill="#707070"/><rect x="30" y="32.6" width="14" height="0.9" fill="#555"/><rect x="2.5" y="35.5" width="4" height="3.2" fill="#d8a828"/><rect x="8" y="36.1" width="8" height="0.9" fill="#707070"/><rect x="30" y="37.9" width="14" height="0.9" fill="#555"/><rect x="2.5" y="40.9" width="4" height="3.2" fill="#4858b8"/><rect x="8" y="41.5" width="14" height="0.9" fill="#707070"/><rect x="30" y="43.3" width="14" height="0.9" fill="#555"/><rect x="2.5" y="46.2" width="4" height="3.2" fill="#4858b8"/><rect x="8" y="46.8" width="10" height="0.9" fill="#707070"/><rect x="30" y="48.6" width="14" height="0.9" fill="#555"/><rect x="2.5" y="51.5" width="4" height="3.2" fill="#4858b8"/><rect x="8" y="52.1" width="6" height="0.9" fill="#707070"/><rect x="30" y="53.9" width="14" height="0.9" fill="#555"/><rect x="2.5" y="56.9" width="4" height="3.2" fill="#4858b8"/><rect x="8" y="57.5" width="12" height="0.9" fill="#707070"/><rect x="30" y="59.3" width="14" height="0.9" fill="#555"/><rect x="2.5" y="62.2" width="4" height="3.2" fill="#4858b8"/><rect x="8" y="62.8" width="14" height="0.9" fill="#707070"/><rect x="30" y="64.6" width="14" height="0.9" fill="#555"/><rect x="2.5" y="67.6" width="4" height="3.2" fill="#4858b8"/><rect x="8" y="68.2" width="20" height="0.9" fill="#707070"/><rect x="30" y="70.0" width="14" height="0.9" fill="#555"/><rect x="2.5" y="72.9" width="4" height="3.2" fill="#4858b8"/><rect x="8" y="73.5" width="8" height="0.9" fill="#707070"/><rect x="30" y="75.3" width="14" height="0.9" fill="#555"/><rect x="2.5" y="78.2" width="4" height="3.2" fill="#4858b8"/><rect x="8" y="78.8" width="10" height="0.9" fill="#707070"/><rect x="30" y="80.6" width="14" height="0.9" fill="#555"/><rect x="1" y="79" width="25" height="0.8" fill="#666"/><rect x="0" y="82" width="51" height="8" fill="#242424"/><rect x="3.0" y="84.5" width="3" height="3" fill="#555"/><rect x="10.2" y="84.5" width="3" height="3" fill="#d8d8d8"/><rect x="17.4" y="84.5" width="3" height="3" fill="#d8d8d8"/><rect x="24.6" y="84.5" width="3" height="3" fill="#d8d8d8"/><rect x="31.8" y="84.5" width="3" height="3" fill="#d8d8d8"/><rect x="39.0" y="84.5" width="3" height="3" fill="#d8d8d8"/><rect x="44" y="18" width="0.8" height="56" fill="#3a3a3a"/></svg><div class="fn" style="left:618px;top:607px"><span style="letter-spacing:-0.16px">Screenshot_2018</span><br><span style="letter-spacing:-0.38px">0803-134554.jpg</span></div><svg class="a" style="left:758px;top:511px;filter:drop-shadow(1px 1px 1px rgba(0,0,0,0.3))" width="52" height="91" viewBox="0 0 52 91"><rect x="0" y="0" width="51" height="90" fill="#2a2a2a"/><rect x="0" y="0" width="51" height="2" fill="#1a1a1a"/><rect x="36" y="0.5" width="13" height="1" fill="#777"/><rect x="0" y="2" width="51" height="7" fill="#262626"/><rect x="2" y="3.5" width="3" height="4" fill="#9aa8c8"/><rect x="7" y="5" width="14" height="1.2" fill="#8a8a8a"/><rect x="26" y="4" width="4" height="3" fill="#ddd"/><rect x="33" y="4" width="3.5" height="3.5" fill="#ccc"/><rect x="40" y="4" width="3.5" height="3.5" fill="#888"/><rect x="1" y="10.5" width="28" height="0.9" fill="#6a6a6a"/><rect x="2" y="13" width="3" height="2" fill="#7a8ab8"/><circle cx="34" cy="14" r="2.3" fill="#3a5aa8"/><circle cx="41" cy="14" r="2" fill="none" stroke="#4aa048" stroke-width="1"/><rect x="2.5" y="19.5" width="4" height="3.2" fill="#d8a828"/><rect x="8" y="20.1" width="30" height="0.9" fill="#707070"/><rect x="30" y="21.9" width="14" height="0.9" fill="#555"/><rect x="2.5" y="24.8" width="4" height="3.2" fill="#d8a828"/><rect x="8" y="25.4" width="30" height="0.9" fill="#707070"/><rect x="30" y="27.2" width="14" height="0.9" fill="#555"/><rect x="2.5" y="30.2" width="4" height="3.2" fill="#d8a828"/><rect x="8" y="30.8" width="18" height="0.9" fill="#707070"/><rect x="30" y="32.6" width="14" height="0.9" fill="#555"/><rect x="2.5" y="35.5" width="4" height="3.2" fill="#d8a828"/><rect x="8" y="36.1" width="8" height="0.9" fill="#707070"/><rect x="30" y="37.9" width="14" height="0.9" fill="#555"/><rect x="2.5" y="40.9" width="4" height="3.2" fill="#d8a828"/><rect x="8" y="41.5" width="14" height="0.9" fill="#707070"/><rect x="30" y="43.3" width="14" height="0.9" fill="#555"/><rect x="2.5" y="46.2" width="4" height="3.2" fill="#d8a828"/><rect x="8" y="46.8" width="10" height="0.9" fill="#707070"/><rect x="30" y="48.6" width="14" height="0.9" fill="#555"/><rect x="2.5" y="51.5" width="4" height="3.2" fill="#d8a828"/><rect x="8" y="52.1" width="6" height="0.9" fill="#707070"/><rect x="30" y="53.9" width="14" height="0.9" fill="#555"/><rect x="2.5" y="56.9" width="4" height="3.2" fill="#d8a828"/><rect x="8" y="57.5" width="12" height="0.9" fill="#707070"/><rect x="30" y="59.3" width="14" height="0.9" fill="#555"/><rect x="2.5" y="62.2" width="4" height="3.2" fill="#d8a828"/><rect x="8" y="62.8" width="14" height="0.9" fill="#707070"/><rect x="30" y="64.6" width="14" height="0.9" fill="#555"/><rect x="2.5" y="67.6" width="4" height="3.2" fill="#4858b8"/><rect x="8" y="68.2" width="20" height="0.9" fill="#707070"/><rect x="30" y="70.0" width="14" height="0.9" fill="#555"/><rect x="1" y="79" width="25" height="0.8" fill="#666"/><rect x="0" y="82" width="51" height="8" fill="#242424"/><rect x="3.0" y="84.5" width="3" height="3" fill="#555"/><rect x="10.2" y="84.5" width="3" height="3" fill="#d8d8d8"/><rect x="17.4" y="84.5" width="3" height="3" fill="#d8d8d8"/><rect x="24.6" y="84.5" width="3" height="3" fill="#d8d8d8"/><rect x="31.8" y="84.5" width="3" height="3" fill="#d8d8d8"/><rect x="39.0" y="84.5" width="3" height="3" fill="#d8d8d8"/><rect x="44" y="18" width="0.8" height="56" fill="#3a3a3a"/></svg><div class="fn" style="left:733px;top:607px"><span style="letter-spacing:-0.16px">Screenshot_2018</span><br><span style="letter-spacing:-0.38px">0806-163649.jpg</span></div><svg class="a" style="left:873px;top:511px;filter:drop-shadow(1px 1px 1px rgba(0,0,0,0.3))" width="52" height="91" viewBox="0 0 52 91"><rect x="0" y="0" width="51" height="90" fill="#2a2a2a"/><rect x="0" y="0" width="51" height="2" fill="#1a1a1a"/><rect x="36" y="0.5" width="13" height="1" fill="#777"/><rect x="0" y="2" width="51" height="7" fill="#262626"/><rect x="2" y="3.5" width="3" height="4" fill="#9aa8c8"/><rect x="7" y="5" width="14" height="1.2" fill="#8a8a8a"/><rect x="26" y="4" width="4" height="3" fill="#ddd"/><rect x="33" y="4" width="3.5" height="3.5" fill="#ccc"/><rect x="40" y="4" width="3.5" height="3.5" fill="#888"/><rect x="1" y="10.5" width="28" height="0.9" fill="#6a6a6a"/><rect x="2" y="13" width="3" height="2" fill="#7a8ab8"/><circle cx="34" cy="14" r="2.3" fill="#3a5aa8"/><circle cx="41" cy="14" r="2" fill="none" stroke="#4aa048" stroke-width="1"/><rect x="2.5" y="19.5" width="4" height="3.2" fill="#d8a828"/><rect x="8" y="20.1" width="30" height="0.9" fill="#707070"/><rect x="30" y="21.9" width="14" height="0.9" fill="#555"/><rect x="2.5" y="24.8" width="4" height="3.2" fill="#d8a828"/><rect x="8" y="25.4" width="30" height="0.9" fill="#707070"/><rect x="30" y="27.2" width="14" height="0.9" fill="#555"/><rect x="2.5" y="30.2" width="4" height="3.2" fill="#d8a828"/><rect x="8" y="30.8" width="18" height="0.9" fill="#707070"/><rect x="30" y="32.6" width="14" height="0.9" fill="#555"/><rect x="2.5" y="35.5" width="4" height="3.2" fill="#d8a828"/><rect x="8" y="36.1" width="8" height="0.9" fill="#707070"/><rect x="30" y="37.9" width="14" height="0.9" fill="#555"/><rect x="2.5" y="40.9" width="4" height="3.2" fill="#d8a828"/><rect x="8" y="41.5" width="14" height="0.9" fill="#707070"/><rect x="30" y="43.3" width="14" height="0.9" fill="#555"/><rect x="2.5" y="46.2" width="4" height="3.2" fill="#d8a828"/><rect x="8" y="46.8" width="10" height="0.9" fill="#707070"/><rect x="30" y="48.6" width="14" height="0.9" fill="#555"/><rect x="2.5" y="51.5" width="4" height="3.2" fill="#d8a828"/><rect x="8" y="52.1" width="6" height="0.9" fill="#707070"/><rect x="30" y="53.9" width="14" height="0.9" fill="#555"/><rect x="2.5" y="56.9" width="4" height="3.2" fill="#d8a828"/><rect x="8" y="57.5" width="12" height="0.9" fill="#707070"/><rect x="30" y="59.3" width="14" height="0.9" fill="#555"/><rect x="2.5" y="62.2" width="4" height="3.2" fill="#d8a828"/><rect x="8" y="62.8" width="14" height="0.9" fill="#707070"/><rect x="30" y="64.6" width="14" height="0.9" fill="#555"/><rect x="2.5" y="67.6" width="4" height="3.2" fill="#4858b8"/><rect x="8" y="68.2" width="20" height="0.9" fill="#707070"/><rect x="30" y="70.0" width="14" height="0.9" fill="#555"/><rect x="1" y="79" width="25" height="0.8" fill="#666"/><rect x="0" y="82" width="51" height="8" fill="#242424"/><rect x="3.0" y="84.5" width="3" height="3" fill="#555"/><rect x="10.2" y="84.5" width="3" height="3" fill="#d8d8d8"/><rect x="17.4" y="84.5" width="3" height="3" fill="#d8d8d8"/><rect x="24.6" y="84.5" width="3" height="3" fill="#d8d8d8"/><rect x="31.8" y="84.5" width="3" height="3" fill="#d8d8d8"/><rect x="39.0" y="84.5" width="3" height="3" fill="#d8d8d8"/><text x="25.5" y="78.5" text-anchor="middle" font-family="Liberation Sans" font-weight="bold" font-size="6.6" fill="#a8c8e8" letter-spacing="0">CODE<tspan fill="#e08838">BY</tspan>.NET</text><rect x="44" y="18" width="0.8" height="56" fill="#3a3a3a"/></svg><div class="fn" style="left:848px;top:607px"><span style="letter-spacing:-0.03px">Viber.jpg</span></div><svg class="a" style="left:984px;top:515px" width="63" height="84"><use href="#page"/></svg><div class="fn" style="left:963px;top:607px"><span style="letter-spacing:-0.03px">viber_data</span></div><svg class="a" style="left:1099px;top:515px" width="63" height="84"><use href="#page"/></svg><div class="fn" style="left:1078px;top:607px"><span style="letter-spacing:-0.02px">viber_data-journ</span><br><span style="letter-spacing:-0.00px">al</span></div><svg class="a" style="left:294px;top:646px" width="63" height="84"><use href="#page"/></svg><div class="fn" style="left:273px;top:738px"><span style="letter-spacing:-0.04px">viber_messages</span></div><svg class="a" style="left:409px;top:646px" width="63" height="84"><use href="#page"/></svg><div class="fn" style="left:388px;top:738px"><span style="letter-spacing:-0.03px">viber_messages-j</span><br><span style="letter-spacing:-0.00px">ournal</span></div><svg class="a" style="left:524px;top:646px" width="63" height="84"><use href="#page"/></svg><div class="fn" style="left:503px;top:738px"><span style="letter-spacing:-0.02px">viber_prefs</span></div><svg class="a" style="left:639px;top:646px" width="63" height="84"><use href="#page"/></svg><div class="fn" style="left:618px;top:738px"><span style="letter-spacing:-0.01px">viber_prefs-journ</span><br><span style="letter-spacing:-0.00px">al</span></div><svg class="a" style="left:739px;top:675px;filter:drop-shadow(1px 1px 1px rgba(0,0,0,0.25))" width="92" height="59" viewBox="0 0 92 59"><rect x="0.5" y="0.5" width="44" height="58" fill="#fff" stroke="#8a8a8a"/><rect x="45.5" y="0.5" width="45" height="58" fill="#fbfbfb" stroke="#8a8a8a"/><rect x="1" y="1" width="43" height="3" fill="#dfe6ee"/><rect x="2" y="2" width="14" height="1" fill="#5a8ad0"/><rect x="1" y="5" width="43" height="2" fill="#eee"/><rect x="3" y="8" width="12" height="4" fill="#dfe8f5" stroke="#9ab" stroke-width="0.5"/><rect x="3" y="14.0" width="16" height="0.8" fill="#9a9a9a"/><rect x="3" y="16.6" width="10" height="0.8" fill="#9a9a9a"/><rect x="3" y="19.2" width="14" height="0.8" fill="#9a9a9a"/><rect x="3" y="21.8" width="12" height="0.8" fill="#9a9a9a"/><rect x="3" y="24.4" width="8" height="0.8" fill="#9a9a9a"/><rect x="3" y="27.0" width="13" height="0.8" fill="#9a9a9a"/><rect x="17" y="6" width="21" height="42" fill="#fff" stroke="#9a9a9a" stroke-width="0.6"/><rect x="19" y="8.0" width="14" height="0.8" fill="#8a8a8a"/><rect x="19" y="10.8" width="12" height="0.8" fill="#8a8a8a"/><rect x="19" y="13.6" width="16" height="0.8" fill="#8a8a8a"/><rect x="19" y="16.4" width="13" height="0.8" fill="#8a8a8a"/><rect x="19" y="19.2" width="15" height="0.8" fill="#8a8a8a"/><rect x="19" y="22.0" width="11" height="0.8" fill="#8a8a8a"/><rect x="19" y="24.8" width="14" height="0.8" fill="#8a8a8a"/><rect x="19" y="27.6" width="16" height="0.8" fill="#8a8a8a"/><rect x="19" y="30.4" width="12" height="0.8" fill="#8a8a8a"/><rect x="19" y="33.2" width="13" height="0.8" fill="#8a8a8a"/><rect x="19" y="36.0" width="15" height="0.8" fill="#8a8a8a"/><rect x="19" y="38.8" width="12" height="0.8" fill="#8a8a8a"/><rect x="17.5" y="40" width="20.5" height="2.5" fill="#5a8ad0"/><rect x="1" y="55" width="43" height="3" fill="#e8e8e8"/><rect x="46" y="1" width="44" height="3" fill="#e8e8e8"/><rect x="52" y="4" width="38" height="3" fill="#3a3a3a"/><rect x="47" y="9" width="8" height="3" fill="#eee" stroke="#aaa" stroke-width="0.5"/><rect x="48" y="15.0" width="26" height="0.8" fill="#9a9a9a"/><rect x="48" y="17.8" width="20" height="0.8" fill="#9a9a9a"/><rect x="48" y="20.6" width="24" height="0.8" fill="#9a9a9a"/><rect x="48" y="23.4" width="18" height="0.8" fill="#9a9a9a"/><rect x="48" y="26.2" width="22" height="0.8" fill="#9a9a9a"/><rect x="46" y="30" width="44" height="0.6" fill="#bbb"/><rect x="48" y="33.0" width="30" height="0.9" fill="#6a6a6a"/><rect x="48" y="36.0" width="24" height="0.9" fill="#6a6a6a"/><rect x="48" y="39.0" width="34" height="0.9" fill="#6a6a6a"/><rect x="48" y="42.0" width="20" height="0.9" fill="#6a6a6a"/><rect x="46" y="55" width="44" height="3" fill="#e8e8e8"/></svg><div class="fn" style="left:733px;top:738px"><span style="letter-spacing:-0.08px">Viber2.jpg</span></div><svg class="a" style="left:854px;top:677px;filter:drop-shadow(1px 1px 1px rgba(0,0,0,0.25))" width="92" height="57" viewBox="0 0 92 57"><rect x="0" y="0" width="91" height="56" fill="#fff" stroke="#d0d0d0" stroke-width="0.6"/><rect x="1" y="1" width="88" height="1.3" fill="#e04848"/><rect x="22" y="5" width="12" height="2" fill="#333"/><rect x="24" y="9" width="8" height="1" fill="#888"/><rect x="57" y="7" width="10" height="2.4" fill="#4a9ad8"/><rect x="67" y="7" width="5" height="2.4" fill="#e07030"/><rect x="72" y="7" width="11" height="2.4" fill="#4a9ad8"/><rect x="16" y="13" width="58" height="43" fill="#e4e8ec" stroke="#556" stroke-width="0.6"/><rect x="16" y="13" width="58" height="3" fill="#6a88a8"/><rect x="16" y="16" width="9" height="40" fill="#c8d4e0"/><rect x="30" y="16" width="8" height="40" fill="#0a0a0a"/><rect x="18" y="18.0" width="5" height="0.9" fill="#556"/><rect x="40" y="18.0" width="18" height="0.9" fill="#8a8a8a"/><rect x="60" y="18.0" width="10" height="0.9" fill="#8a8a8a"/><rect x="16" y="19.8" width="58" height="0.4" fill="#9aa"/><rect x="18" y="21.5" width="5" height="0.9" fill="#556"/><rect x="40" y="21.5" width="18" height="0.9" fill="#8a8a8a"/><rect x="60" y="21.5" width="10" height="0.9" fill="#8a8a8a"/><rect x="16" y="23.3" width="58" height="0.4" fill="#9aa"/><rect x="18" y="25.0" width="5" height="0.9" fill="#556"/><rect x="40" y="25.0" width="18" height="0.9" fill="#8a8a8a"/><rect x="60" y="25.0" width="10" height="0.9" fill="#8a8a8a"/><rect x="16" y="26.8" width="58" height="0.4" fill="#9aa"/><rect x="18" y="28.5" width="5" height="0.9" fill="#556"/><rect x="40" y="28.5" width="18" height="0.9" fill="#8a8a8a"/><rect x="60" y="28.5" width="10" height="0.9" fill="#8a8a8a"/><rect x="16" y="30.3" width="58" height="0.4" fill="#9aa"/><rect x="18" y="32.0" width="5" height="0.9" fill="#556"/><rect x="40" y="32.0" width="18" height="0.9" fill="#8a8a8a"/><rect x="60" y="32.0" width="10" height="0.9" fill="#8a8a8a"/><rect x="16" y="33.8" width="58" height="0.4" fill="#9aa"/><rect x="18" y="35.5" width="5" height="0.9" fill="#556"/><rect x="40" y="35.5" width="18" height="0.9" fill="#8a8a8a"/><rect x="60" y="35.5" width="10" height="0.9" fill="#8a8a8a"/><rect x="16" y="37.3" width="58" height="0.4" fill="#9aa"/><rect x="18" y="39.0" width="5" height="0.9" fill="#556"/><rect x="40" y="39.0" width="18" height="0.9" fill="#8a8a8a"/><rect x="60" y="39.0" width="10" height="0.9" fill="#8a8a8a"/><rect x="16" y="40.8" width="58" height="0.4" fill="#9aa"/><rect x="18" y="42.5" width="5" height="0.9" fill="#556"/><rect x="40" y="42.5" width="18" height="0.9" fill="#8a8a8a"/><rect x="60" y="42.5" width="10" height="0.9" fill="#8a8a8a"/><rect x="16" y="44.3" width="58" height="0.4" fill="#9aa"/><rect x="18" y="46.0" width="5" height="0.9" fill="#556"/><rect x="40" y="46.0" width="18" height="0.9" fill="#8a8a8a"/><rect x="60" y="46.0" width="10" height="0.9" fill="#8a8a8a"/><rect x="16" y="47.8" width="58" height="0.4" fill="#9aa"/><rect x="18" y="49.5" width="5" height="0.9" fill="#556"/><rect x="40" y="49.5" width="18" height="0.9" fill="#8a8a8a"/><rect x="60" y="49.5" width="10" height="0.9" fill="#8a8a8a"/><rect x="16" y="51.3" width="58" height="0.4" fill="#9aa"/><rect x="18" y="53.0" width="5" height="0.9" fill="#556"/><rect x="40" y="53.0" width="18" height="0.9" fill="#8a8a8a"/><rect x="60" y="53.0" width="10" height="0.9" fill="#8a8a8a"/><rect x="16" y="54.8" width="58" height="0.4" fill="#9aa"/></svg><div class="fn" style="left:848px;top:738px"><span style="letter-spacing:-0.08px">Viber3.jpg</span></div><svg class="a" style="left:969px;top:683px;filter:drop-shadow(1px 1px 1px rgba(0,0,0,0.25))" width="92" height="52" viewBox="0 0 92 52"><rect x="0.5" y="0.5" width="90" height="50" fill="#f6f6f6" stroke="#b0b0b0" stroke-width="0.8"/><rect x="1" y="1" width="89" height="2" fill="#e8e8e8"/><rect x="38" y="1.5" width="8" height="2.4" fill="#4a9ad8"/><rect x="46" y="1.5" width="4" height="2.4" fill="#e07030"/><rect x="50" y="1.5" width="8" height="2.4" fill="#4a9ad8"/><rect x="2" y="6" width="54" height="20" fill="#fff" stroke="#c8c8c8" stroke-width="0.5"/><rect x="4" y="9.0" width="40" height="0.8" fill="#a8a0c8"/><rect x="4" y="12.0" width="34" height="0.8" fill="#a8a0c8"/><rect x="4" y="15.0" width="44" height="0.8" fill="#a8a0c8"/><rect x="4" y="18.0" width="30" height="0.8" fill="#a8a0c8"/><rect x="4" y="21.0" width="20" height="0.8" fill="#a8a0c8"/><rect x="2" y="27" width="54" height="22" fill="#fff" stroke="#c8c8c8" stroke-width="0.5"/><rect x="5" y="24" width="3.5" height="15" fill="#0a0a0a"/><rect x="11" y="24" width="3.5" height="15" fill="#0a0a0a"/><rect x="17" y="29.0" width="16" height="0.8" fill="#9a9a9a"/><rect x="40" y="29.0" width="8" height="0.8" fill="#b0b0b0"/><rect x="17" y="31.7" width="20" height="0.8" fill="#9a9a9a"/><rect x="40" y="31.7" width="8" height="0.8" fill="#b0b0b0"/><rect x="17" y="34.4" width="12" height="0.8" fill="#9a9a9a"/><rect x="40" y="34.4" width="8" height="0.8" fill="#b0b0b0"/><rect x="17" y="37.1" width="18" height="0.8" fill="#9a9a9a"/><rect x="40" y="37.1" width="8" height="0.8" fill="#b0b0b0"/><rect x="17" y="39.8" width="14" height="0.8" fill="#9a9a9a"/><rect x="40" y="39.8" width="8" height="0.8" fill="#b0b0b0"/><rect x="17" y="42.5" width="10" height="0.8" fill="#9a9a9a"/><rect x="40" y="42.5" width="8" height="0.8" fill="#b0b0b0"/><rect x="17" y="45.2" width="16" height="0.8" fill="#9a9a9a"/><rect x="40" y="45.2" width="8" height="0.8" fill="#b0b0b0"/><rect x="58" y="4" width="32" height="18" fill="#fff" stroke="#c8c8c8" stroke-width="0.5"/><rect x="72" y="5" width="17" height="2" fill="#ccc"/><rect x="58" y="24" width="32" height="26" fill="#fff" stroke="#c8c8c8" stroke-width="0.5"/><rect x="58" y="24" width="32" height="2" fill="#ddd"/><rect x="60" y="29.0" width="20" height="0.8" fill="#aaa"/><rect x="60" y="32.0" width="14" height="0.8" fill="#aaa"/><rect x="60" y="35.0" width="18" height="0.8" fill="#aaa"/></svg><div class="fn" style="left:963px;top:738px"><span style="letter-spacing:-0.08px">Viber4.jpg</span></div><div class="a" style="left:963px;top:627px;width:109px;height:5px;background:#d42030;border-radius:3px"></div><svg class="a" style="left:0;top:0" width="1213" height="846"><text x="602" y="449" transform="rotate(-31 602 422)" text-anchor="middle" font-family="Liberation Sans" font-weight="bold" font-size="106" fill="#000" fill-opacity="0.035" letter-spacing="3">codeby.net</text></svg></div><div class="a" style="left:30px;top:770px;width:1180px;height:76px;background:#f0f0f0"></div>
<div class="t" style="left:160px;top:783px">Имя файла:</div>
<div class="a" style="left:230px;top:779px;width:964px;height:24px;background:#fff;border:1px solid #a0a0a0"></div>
<div class="t" style="left:234px;top:783px">viber_data</div>
<svg class="a" style="left:1178px;top:785px" width="14" height="12" viewBox="0 0 14 12"><path d="M2.5 3.5 L7 8 L11.5 3.5" fill="none" stroke="#555" stroke-width="1.3"/></svg>
<div class="btn" style="left:1007px;top:809px;width:86px;height:23px;border:2px solid #0c6fb8;line-height:19px">Открыть</div>
<div class="btn" style="left:1107px;top:809px;width:86px;height:23px;line-height:21px">Отмена</div>
<div class="a" style="left:1004px;top:833px;width:91px;height:5px;background:#d42030;border-radius:3px"></div>
<svg class="a" style="left:1199px;top:834px" width="11" height="11" viewBox="0 0 11 11"><g fill="#b0b0b0"><rect x="8" y="0" width="2" height="2"/><rect x="5" y="3" width="2" height="2"/><rect x="8" y="3" width="2" height="2"/><rect x="2" y="6" width="2" height="2"/><rect x="5" y="6" width="2" height="2"/><rect x="8" y="6" width="2" height="2"/></g></svg>
</body></html>
